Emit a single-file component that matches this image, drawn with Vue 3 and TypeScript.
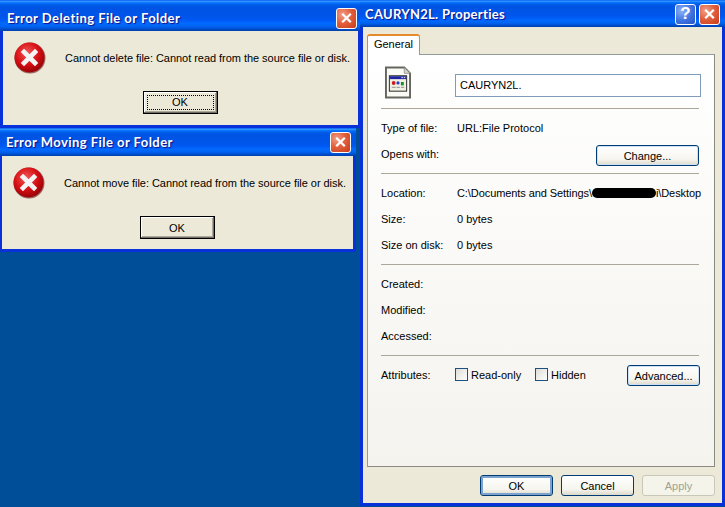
<script setup lang="ts">
interface Dlg { cls: string; title: string; msg: string; focused: boolean }
const dialogs: Dlg[] = [
  { cls: 'w1', title: 'Error Deleting File or Folder', msg: 'Cannot delete file: Cannot read from the source file or disk.', focused: true },
  { cls: 'w2', title: 'Error Moving File or Folder', msg: 'Cannot move file: Cannot read from the source file or disk.', focused: false },
]
</script>

<template>
  <div class="desktop">
    <section v-for="d in dialogs" :key="d.cls" class="win dlg" :class="d.cls">
      <header class="title">
        <span class="title-text">{{ d.title }}</span>
        <span class="cap close">
          <svg viewBox="0 0 20 20" width="20" height="20"><path d="M5.5 5.5 14.5 14.5M14.5 5.5 5.5 14.5" stroke="#fff" stroke-width="2.4" fill="none" /></svg>
        </span>
      </header>
      <div class="body dlg-body">
        <div class="msg-row">
          <svg class="err" viewBox="0 0 32 32" width="32" height="32">
            <defs>
              <radialGradient id="red" cx="42%" cy="35%" r="70%">
                <stop offset="0" stop-color="#f05a5a" />
                <stop offset=".55" stop-color="#d80f14" />
                <stop offset="1" stop-color="#8c0005" />
              </radialGradient>
            </defs>
            <circle cx="16" cy="16" r="15.5" fill="#5f0003" opacity=".55" />
            <circle cx="15.5" cy="15.5" r="15" fill="url(#red)" />
            <path d="M10 10 21 21M21 10 10 21" stroke="#f4f4f4" stroke-width="4.6" stroke-linecap="square" fill="none" />
          </svg>
          <p class="msg">{{ d.msg }}</p>
        </div>
        <div class="classic"><span class="classic-in" :class="{ dotted: d.focused }">OK</span></div>
      </div>
    </section>

    <section class="win props">
      <header class="title prop-title">
        <span class="title-text">CAURYN2L. Properties</span>
        <span class="cap help">?</span>
        <span class="cap close">
          <svg viewBox="0 0 20 20" width="20" height="20"><path d="M5.5 5.5 14.5 14.5M14.5 5.5 5.5 14.5" stroke="#fff" stroke-width="2.4" fill="none" /></svg>
        </span>
      </header>
      <div class="body prop-body">
        <div class="tab">General</div>
        <div class="panel">
          <div class="head-row">
            <svg class="file" viewBox="0 0 27 33" width="27" height="33">
              <path d="M1 1H20L26 7V32H1Z" fill="#fbfbf6" stroke="#66665f" stroke-width="2" />
              <path d="M20 1V7H26Z" fill="#d6d6d0" stroke="#8a8a84" stroke-width=".8" />
              <rect x="4.5" y="9.5" width="18" height="16" fill="#f2f0e2" stroke="#222" />
              <rect x="5" y="10" width="17" height="3" fill="#1c22a0" />
              <rect x="17" y="11" width="1.5" height="1" fill="#fff" /><rect x="19.5" y="11" width="1.5" height="1" fill="#fff" />
              <circle cx="9" cy="17" r="2" fill="#cc1d1d" /><circle cx="13.5" cy="17" r="1.7" fill="#2a3fc8" /><path d="M16.5 19.5V16H19.5V19.5Z" fill="#17902a" />
              <path d="M7 21.5H11M12 21.5H15.5M16.5 21.5H20" stroke="#8f8f8f" stroke-width="1" />
            </svg>
            <div class="field">CAURYN2L.</div>
          </div>
          <hr />
          <div class="row"><span class="lab">Type of file:</span><span>URL:File Protocol</span></div>
          <div class="row">
            <span class="lab">Opens with:</span>
            <button class="xp change">Change...</button>
          </div>
          <hr class="gap" />
          <div class="row"><span class="lab">Location:</span><span class="loc">C:\Documents and Settings\<i class="blob"></i>i\Desktop</span></div>
          <div class="row"><span class="lab">Size:</span><span>0 bytes</span></div>
          <div class="row"><span class="lab">Size on disk:</span><span>0 bytes</span></div>
          <hr class="gap" />
          <div class="row"><span class="lab">Created:</span></div>
          <div class="row"><span class="lab">Modified:</span></div>
          <div class="row"><span class="lab">Accessed:</span></div>
          <hr class="gap" />
          <div class="row">
            <span class="lab attr-lab">Attributes:</span>
            <span class="chk ro"><i class="box"></i>Read-only</span>
            <span class="chk"><i class="box"></i>Hidden</span>
            <button class="xp adv">Advanced...</button>
          </div>
        </div>
        <div class="actions">
          <button class="xp act default">OK</button>
          <button class="xp act">Cancel</button>
          <button class="xp act off">Apply</button>
        </div>
      </div>
    </section>
  </div>
</template>

<style>
html, body { margin: 0; background: #004e98; }
</style>

<style scoped>
.desktop { position: relative; width: 725px; height: 507px; overflow: hidden; background: #004e98; font-family: "Liberation Sans", Arial, sans-serif; font-size: 11px; color: #000; }
.win { position: absolute; box-sizing: border-box; display: flex; flex-direction: column; background: #0831d9; }
.dlg.w1 { left: 0; top: 0; width: 361px; height: 128px; padding: 0 3px 3px 3px; }
.dlg.w2 { left: -1px; top: 128px; width: 357px; height: 124px; padding: 0 3px 3px 3px; }
.props { left: 360px; top: 0; width: 365px; height: 506px; padding: 0 3px 3px 3px; }
.title { flex: none; height: 31px; margin: 0 -3px; padding: 0 4px 0 7px; display: flex; align-items: center; gap: 3px; box-sizing: border-box;
  background: linear-gradient(180deg,#0058ee 0%,#3593ff 4%,#288eff 6%,#127dff 8%,#036ffc 10%,#0262ee 14%,#0057e5 20%,#0054e3 24%,#0055eb 56%,#005bf5 66%,#026afe 76%,#0062ef 86%,#0052d6 92%,#0040ab 100%); }
.w2 .title { height: 28px; padding-right: 5px; }
.w1 .title { padding-top: 5px; }
.prop-title { height: 27px; padding: 1px 5px 0 5px; }
.title-text { flex: 1; font-family: Lato, "Open Sans", sans-serif; font-weight: 700; font-size: 13px; letter-spacing: .45px; color: #fff; text-shadow: 1px 1px 1px #0f1089; white-space: nowrap; }
.prop-title .title-text { letter-spacing: .3px; }
.cap { flex: none; box-sizing: border-box; width: 21px; height: 21px; border: 1px solid #fff; border-radius: 3px; display: flex; align-items: center; justify-content: center; }
.close { background: radial-gradient(circle at 30% 30%, #f0a08a 0%, #e2603d 45%, #c93a18 100%); }
.help { background: radial-gradient(circle at 30% 30%, #8fb0f5 0%, #3f72e0 55%, #2553c8 100%); color: #fff; font: 700 17px "Liberation Sans", sans-serif; }
.body { flex: 1; min-height: 0; background: #ece9d8; }
.dlg-body { display: flex; flex-direction: column; }
.msg-row { display: flex; align-items: flex-start; padding: 11px 0 0 11px; height: 46px; }
.err { flex: none; }
.msg { margin: 9px 0 0 19px; white-space: nowrap; font-size: 11px; line-height: 14px; letter-spacing: -.04px; }
.classic { align-self: center; margin: 3px 0 0 -1px; box-sizing: border-box; width: 75px; height: 23px; border: 1px solid #000; background: #ece9d8; box-shadow: inset -1px -1px 0 #716f64, inset 1px 1px 0 #fff, inset -2px -2px 0 #aca899; padding: 3px; }
.classic-in { display: block; height: 100%; line-height: 15px; text-align: center; box-sizing: border-box; border: 1px solid transparent; }
.classic-in.dotted { border: 1px dotted #000; line-height: 13px; }
.prop-body { padding: 7px 7px 0 4px; display: flex; flex-direction: column; }
.tab { align-self: flex-start; box-sizing: border-box; width: 53px; height: 21px; margin-bottom: -1px; position: relative; z-index: 1; padding-top: 2px; text-align: center; background: #fff; border: 1px solid #919b9c; border-bottom: 0; border-top: 2px solid #e68b2c; border-radius: 3px 3px 0 0; }
.panel { flex: none; box-sizing: border-box; height: 413px; padding: 11px 13px 0 13px; border: 1px solid #919b9c; border-right-color: #8a8a80; border-bottom-color: #8a8a80; background: linear-gradient(180deg,#fff 0%,#f4f3ee 100%); }
.head-row { display: flex; align-items: flex-start; height: 42px; padding-left: 4px; }
.field { margin: 8px 0 0 44px; box-sizing: border-box; flex: none; width: 246px; height: 23px; padding: 3px 4px; border: 1px solid #7f9db9; background: #fff; line-height: 15px; }
hr { margin: 0; border: 0; border-top: 1px solid #aca899; height: 0; width: 318px; }
hr.gap { margin-top: 6px; }
.row { position: relative; display: flex; align-items: center; box-sizing: border-box; height: 26px; padding-top: 1px; padding-bottom: 2px; white-space: nowrap; }
hr + .row { margin-top: 6px; }
.lab { flex: none; width: 76px; }
.attr-lab { width: 74px; }
.loc { letter-spacing: -.08px; }
.xp { box-sizing: border-box; border: 1px solid #003c74; border-radius: 3px; background: linear-gradient(180deg,#fff 0%,#f6f5ee 70%,#dcd8cb 100%); font: inherit; color: #000; padding: 0; }
.change { position: absolute; left: 215px; top: 4px; width: 103px; height: 21px; box-shadow: inset 0 0 0 1px #cde0f5; }
.blob { display: inline-block; vertical-align: -1px; width: 64px; height: 10px; background: #000; border-radius: 5px; }
.chk { display: flex; align-items: center; }
.ro { width: 80px; }
.box { box-sizing: border-box; width: 13px; height: 13px; margin-right: 3px; border: 1px solid #1c5180; background: linear-gradient(135deg,#dcdcd7,#fff); }
.adv { position: absolute; left: 246px; top: 3px; width: 73px; height: 21px; box-shadow: inset 0 0 0 1px #cde0f5; }
.actions { display: flex; gap: 8px; justify-content: flex-end; margin-top: 8px; }
.act { width: 73px; height: 21px; }
.default { box-shadow: inset 0 0 0 2px #7da2ce; }
.off { color: #a1a192; border-color: #c9c7ba; background: #f5f4ea; }
</style>
